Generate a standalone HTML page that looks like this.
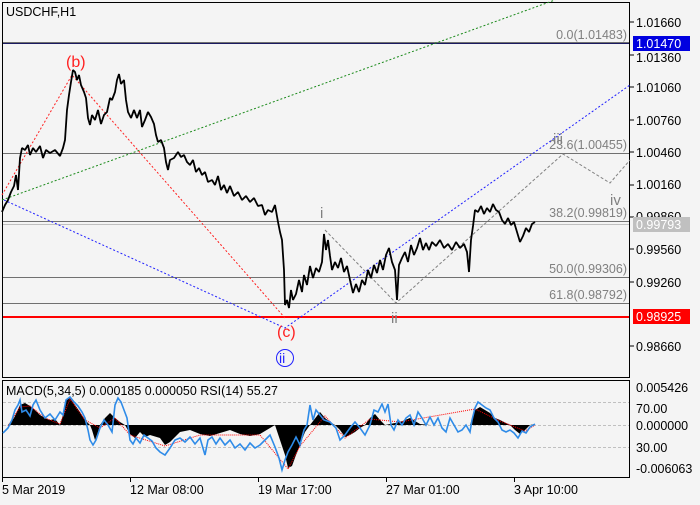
<!DOCTYPE html>
<html><head><style>
body{margin:0;background:#f4f4f4;width:700px;height:500px;overflow:hidden;font-family:"Liberation Sans",sans-serif}
svg text{font-family:"Liberation Sans",sans-serif;font-size:12.5px}
</style></head><body>
<svg width="700" height="500" viewBox="0 0 700 500" xmlns="http://www.w3.org/2000/svg">
<rect width="700" height="500" fill="#f4f4f4"/>
<rect x="2.5" y="2.5" width="627" height="375" fill="#f4f4f4" stroke="#000"/>
<rect x="2.5" y="380.5" width="627" height="97" fill="#f4f4f4" stroke="#000"/>
<line x1="3" y1="43" x2="629" y2="43" stroke="#707070" stroke-width="2"/>
<line x1="3" y1="43.5" x2="629" y2="43.5" stroke="#1a1a60" stroke-width="1"/>
<line x1="3" y1="153.5" x2="629" y2="153.5" stroke="#707070"/>
<line x1="3" y1="221.5" x2="629" y2="221.5" stroke="#707070"/>
<line x1="3" y1="224.5" x2="629" y2="224.5" stroke="#c0c0c0"/>
<line x1="3" y1="277.5" x2="629" y2="277.5" stroke="#707070"/>
<line x1="3" y1="303.5" x2="629" y2="303.5" stroke="#707070"/>
<line x1="3" y1="317" x2="629" y2="317" stroke="#ff0000" stroke-width="2"/>
<g fill="#808080" text-anchor="end">
<text x="627" y="39">0.0(1.01483)</text>
<text x="627" y="149">23.6(1.00455)</text>
<text x="627" y="217">38.2(0.99819)</text>
<text x="627" y="273">50.0(0.99306)</text>
<text x="627" y="299">61.8(0.98792)</text>
</g>
<polyline points="2,200 555,0" fill="none" stroke="#1a8a1a" stroke-dasharray="2,2"/>
<polyline points="4,200 285,328 630,85" fill="none" stroke="#2020ff" stroke-dasharray="2,2"/>
<polyline points="2,195 72,75 285,318" fill="none" stroke="#ff2020" stroke-dasharray="2,2"/>
<polyline points="325,230 396,303 563,154 610,183 630,160" fill="none" stroke="#808080" stroke-dasharray="3,2"/>
<polyline fill="none" stroke="#000" stroke-width="1.8" stroke-linejoin="bevel" points="2,212 5,205 8,200 11,192 14,186 16,175 18,190 20,158 22,148 25,150 28,145 30,155 33,148 36,152 40,146 43,158 46,150 50,153 55,150 60,156 63,148 65,140 67,110 69,95 71,82 73,70 75,72 77,80 79,75 81,85 84,92 86,98 88,118 90,125 92,115 95,120 98,110 101,124 104,115 107,112 110,98 112,100 115,92 117,80 119,74 121,84 124,80 126,100 128,112 131,118 134,110 137,118 140,110 142,127 145,120 148,112 151,117 154,124 156,135 158,142 161,140 164,148 166,162 168,170 170,160 174,158 178,152 181,157 184,155 187,162 190,165 193,160 196,172 199,168 202,175 205,172 208,182 212,180 215,185 218,176 221,190 224,185 227,193 230,186 234,196 238,192 242,200 246,196 250,202 254,198 258,206 262,205 265,215 268,210 272,212 275,205 278,222 280,232 282,240 284,270 285,305 287,300 289,308 291,290 293,300 296,294 299,280 302,292 304,275 307,285 310,266 313,278 316,268 319,272 322,262 324,234 326,250 328,240 330,256 332,270 335,262 338,268 341,258 344,272 347,266 350,280 353,293 356,284 359,292 362,280 365,285 368,270 371,278 374,265 377,273 380,260 383,270 386,255 389,248 392,262 395,270 397,300 399,265 402,258 405,252 408,262 411,245 414,255 417,248 420,238 423,250 426,243 429,250 432,242 436,246 440,240 444,248 448,244 452,250 456,242 460,248 464,244 467,252 469,272 471,240 473,226 475,210 478,212 481,206 484,214 487,208 490,212 493,204 496,210 499,212 502,220 505,224 508,218 511,225 514,222 517,232 520,242 523,236 526,228 529,232 532,224 535,222"/>
<text x="66" y="67" fill="#ff2020" style="font-size:16px">(b)</text>
<text x="277" y="337" fill="#ff2020" style="font-size:16px">(c)</text>
<circle cx="285" cy="358" r="8.5" fill="none" stroke="#2020ff"/>
<text x="279" y="363" fill="#2020ff" style="font-size:14px">ii</text>
<text x="320" y="218" fill="#808080" style="font-size:15px">i</text>
<text x="391" y="323" fill="#808080" style="font-size:15px">ii</text>
<text x="553" y="144" fill="#808080" style="font-size:15px">iii</text>
<text x="610" y="205" fill="#808080" style="font-size:15px">iv</text>
<text x="6" y="16" fill="#000">USDCHF,H1</text>
<g fill="#000">
<text x="636" y="27">1.01660</text>
<text x="636" y="62">1.01360</text>
<text x="636" y="92">1.01060</text>
<text x="636" y="125">1.00760</text>
<text x="636" y="157">1.00460</text>
<text x="636" y="189">1.00160</text>
<text x="636" y="221">0.99860</text>
<text x="636" y="254">0.99560</text>
<text x="636" y="287">0.99260</text>
<text x="636" y="351">0.98660</text>
</g>
<g stroke="#000"><line x1="630" y1="22" x2="634" y2="22"/><line x1="630" y1="55" x2="634" y2="55"/><line x1="630" y1="87" x2="634" y2="87"/><line x1="630" y1="120" x2="634" y2="120"/><line x1="630" y1="152" x2="634" y2="152"/><line x1="630" y1="185" x2="634" y2="185"/><line x1="630" y1="217" x2="634" y2="217"/><line x1="630" y1="249" x2="634" y2="249"/><line x1="630" y1="282" x2="634" y2="282"/><line x1="630" y1="346" x2="634" y2="346"/></g>
<rect x="633" y="36" width="57" height="15" fill="#0000e0"/>
<text x="636" y="48" fill="#fff">1.01470</text>
<rect x="633" y="217" width="57" height="15" fill="#c0c0c0"/>
<text x="636" y="229" fill="#fff">0.99793</text>
<rect x="633" y="309" width="57" height="15" fill="#ff0000"/>
<text x="636" y="321" fill="#fff">0.98925</text>
<line x1="3" y1="402.5" x2="629" y2="402.5" stroke="#c0c0c0" stroke-dasharray="3,2"/>
<line x1="3" y1="425.5" x2="629" y2="425.5" stroke="#c0c0c0" stroke-dasharray="3,2"/>
<line x1="3" y1="447.5" x2="629" y2="447.5" stroke="#c0c0c0" stroke-dasharray="3,2"/>
<polygon fill="#000" points="8,425 14,418 20,405 25,403 30,406 35,410 40,415 45,418 50,420 55,419 60,425 63,415 66,400 70,398 75,405 80,412 85,420 90,425 92,430 95,440 98,432 100,425 105,418 110,413 115,418 120,422 125,425 130,434 135,438 140,432 145,437 150,435 160,438 165,445 170,442 175,437 180,432 190,430 200,434 210,436 220,433 230,430 240,434 250,436 260,434 270,428 275,425 280,440 285,455 288,468 292,466 296,455 300,445 305,432 310,425 320,412 325,418 330,422 335,425 340,430 345,437 350,435 355,432 360,428 365,425 370,418 375,414 380,420 385,425 400,422 410,418 420,424 430,425 470,425 475,410 480,407 485,410 490,413 495,418 500,420 510,425 515,430 520,434 525,430 530,425 535,424 535,425 8,425"/>
<polyline fill="none" stroke="#ff0000" stroke-dasharray="1,1" points="8,426 20,407 30,406 45,418 60,424 70,399 85,420 100,428 115,418 130,435 165,446 200,435 260,435 288,469 300,446 325,416 345,438 370,419 400,422 475,409 500,421 525,431 535,425"/>
<polyline fill="none" stroke="#2e8be8" stroke-width="1.6" points="3,433 8,428 12,420 15,410 18,405 20,400 22,412 26,410 30,416 33,405 36,400 40,410 45,418 50,414 55,420 60,412 63,415 66,400 70,397 74,402 78,406 82,412 85,418 88,430 90,440 93,445 96,440 100,428 104,420 108,425 112,432 115,405 118,398 121,402 124,410 127,418 130,440 133,444 136,438 140,443 144,435 148,438 152,441 156,448 160,452 165,455 170,448 175,440 180,438 185,442 190,437 195,444 200,438 205,455 208,440 212,437 216,444 220,438 225,445 230,440 235,448 240,444 245,450 250,443 255,448 260,445 265,440 270,435 275,447 279,458 282,470 285,460 288,452 292,445 296,437 300,445 304,430 307,425 310,405 313,420 316,410 320,415 324,420 330,422 336,428 340,440 345,435 350,428 355,422 360,428 365,435 370,425 374,410 378,412 382,404 385,412 388,404 391,425 394,430 398,420 402,425 406,418 410,415 414,425 418,412 422,418 426,425 430,417 434,425 438,418 442,428 446,432 450,418 454,425 458,432 462,430 466,425 470,432 472,420 475,408 478,402 482,405 486,408 490,410 494,418 498,422 502,430 506,432 510,430 514,433 518,438 522,431 526,433 530,427 535,424"/>
<text x="6" y="395" fill="#000" textLength="272" lengthAdjust="spacingAndGlyphs">MACD(5,34,5) 0.000185 0.000050 RSI(14) 55.27</text>
<g fill="#000">
<text x="636" y="392">0.005426</text>
<text x="636" y="413">70.00</text>
<text x="636" y="430">0.000000</text>
<text x="636" y="452">30.00</text>
<text x="636" y="473">-0.006063</text>
</g>
<g stroke="#000"><line x1="2.5" y1="478" x2="2.5" y2="482"/><line x1="130.5" y1="478" x2="130.5" y2="482"/><line x1="258.5" y1="478" x2="258.5" y2="482"/><line x1="386.5" y1="478" x2="386.5" y2="482"/><line x1="514.5" y1="478" x2="514.5" y2="482"/></g>
<g fill="#000">
<text x="2" y="494">5 Mar 2019</text>
<text x="130" y="494">12 Mar 08:00</text>
<text x="258" y="494">19 Mar 17:00</text>
<text x="386" y="494">27 Mar 01:00</text>
<text x="514" y="494">3 Apr 10:00</text>
</g>
</svg>
</body></html>
